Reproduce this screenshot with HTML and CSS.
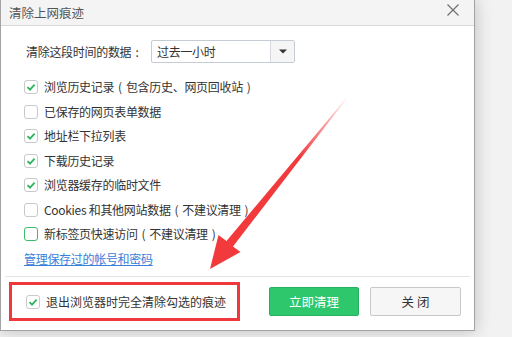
FILE: index.html
```html
<!DOCTYPE html>
<html lang="zh-CN">
<head>
<meta charset="utf-8">
<title>清除上网痕迹</title>
<link rel="stylesheet" href="styles.css">
</head>
<body>
<div class="dialog">
  <div class="titlebar">
    <span class="title">清除上网痕迹</span>
    <svg class="close" width="12" height="12" viewBox="0 0 12 12"><path d="M0.5 0.5 L11.5 11.5 M11.5 0.5 L0.5 11.5" stroke="#707070" stroke-width="1.2" fill="none"/></svg>
  </div>
  <div class="content">
    <div class="range-row">
      <span class="label">清除这段时间的数据<span class="fp">:</span></span>
      <div class="select">
        <span class="select-value">过去一小时</span>
        <span class="select-btn"><svg width="8" height="5" viewBox="0 0 8 5"><path d="M0 0.5 H8 L4 4.5 Z" fill="#333"/></svg></span>
      </div>
    </div>
    <ul class="options">
      <li class="opt"><span class="cb checked"><svg width="14" height="14" viewBox="0 0 14 14"><path d="M3.5 7.2 L6 9.6 L10.6 4.6" stroke="#2db45c" stroke-width="1.8" fill="none"/></svg></span><span class="opt-text">浏览历史记录<span class="fp">(</span>包含历史、网页回收站<span class="fp">)</span></span></li>
      <li class="opt"><span class="cb"></span><span class="opt-text">已保存的网页表单数据</span></li>
      <li class="opt"><span class="cb checked"><svg width="14" height="14" viewBox="0 0 14 14"><path d="M3.5 7.2 L6 9.6 L10.6 4.6" stroke="#2db45c" stroke-width="1.8" fill="none"/></svg></span><span class="opt-text">地址栏下拉列表</span></li>
      <li class="opt"><span class="cb checked"><svg width="14" height="14" viewBox="0 0 14 14"><path d="M3.5 7.2 L6 9.6 L10.6 4.6" stroke="#2db45c" stroke-width="1.8" fill="none"/></svg></span><span class="opt-text">下载历史记录</span></li>
      <li class="opt"><span class="cb checked"><svg width="14" height="14" viewBox="0 0 14 14"><path d="M3.5 7.2 L6 9.6 L10.6 4.6" stroke="#2db45c" stroke-width="1.8" fill="none"/></svg></span><span class="opt-text">浏览器缓存的临时文件</span></li>
      <li class="opt"><span class="cb"></span><span class="opt-text">Cookies 和其他网站数据<span class="fp">(</span>不建议清理<span class="fp">)</span></span></li>
      <li class="opt"><span class="cb hover"></span><span class="opt-text">新标签页快速访问<span class="fp">(</span>不建议清理<span class="fp">)</span></span></li>
    </ul>
    <div class="link-row"><a class="link" href="#">管理保存过的帐号和密码</a></div>
  </div>
  <div class="footer">
    <div class="highlight">
      <span class="cb checked"><svg width="14" height="14" viewBox="0 0 14 14"><path d="M3.5 7.2 L6 9.6 L10.6 4.6" stroke="#2db45c" stroke-width="1.8" fill="none"/></svg></span>
      <span class="opt-text">退出浏览器时完全清除勾选的痕迹</span>
    </div>
    <div class="buttons">
      <button class="btn primary">立即清理</button>
      <button class="btn secondary">关 闭</button>
    </div>
  </div>
</div>
<svg class="arrow" width="512" height="337" viewBox="0 0 512 337">
  <defs>
    <linearGradient id="fade" gradientUnits="userSpaceOnUse" x1="346" y1="99" x2="300" y2="157">
      <stop offset="0" stop-color="#f23a3c" stop-opacity="0.1"/>
      <stop offset="1" stop-color="#f23a3c" stop-opacity="1"/>
    </linearGradient>
  </defs>
  <polygon fill="url(#fade)" points="346.3,99.2 345.7,98.8 226.5,241 218.5,235 210,269 240.5,252 233,246.5"/>
</svg>
</body>
</html>
```
FILE: styles.css
```css
html, body {
  margin: 0;
  padding: 0;
}
body {
  width: 512px;
  height: 337px;
  background: #f2f2f2;
  font-family: "Noto Sans CJK SC", "Microsoft YaHei", sans-serif;
  font-size: 12px;
  color: #333;
  position: relative;
  overflow: hidden;
}
.dialog {
  width: 475px;
  box-sizing: border-box;
  background: #fff;
  border: 1px solid #a3a3a3;
  border-top: none;
  box-shadow: 0 0 16px rgba(0, 0, 0, 0.22);
}
.titlebar {
  height: 25px;
  background: #f4f4f4;
  border-bottom: 1px solid #d9d9d9;
  display: flex;
  align-items: center;
  justify-content: space-between;
  padding: 0 8px 0 8px;
}
.title {
  font-size: 12.5px;
  color: #555;
  line-height: 25px;
  margin-top: -1px;
}
.close {
  margin-top: -5px;
  margin-right: 7px;
}
.content {
  padding: 14px 0 5px 23px;
}
.range-row {
  display: flex;
  align-items: center;
  height: 23px;
}
.label {
  flex: 0 0 125px;
  margin-left: 2px;
  line-height: 23px;
  letter-spacing: -0.3px;
}
.fp {
  display: inline-block;
  width: 11.7px;
  text-align: center;
  letter-spacing: 0;
}
.select {
  width: 144px;
  height: 23px;
  box-sizing: border-box;
  border: 1px solid #c6ccd4;
  border-radius: 2px;
  display: flex;
  align-items: center;
}
.select-value {
  flex: 1;
  padding-left: 5px;
  line-height: 21px;
  letter-spacing: -0.3px;
}
.select-btn {
  width: 23px;
  height: 21px;
  background: #f5f5f5;
  border-left: 1px solid #d6dae0;
  display: flex;
  align-items: center;
  justify-content: center;
}
.options {
  list-style: none;
  margin: 12px 0 0 0;
  padding: 0;
}
.opt {
  height: 24.5px;
  display: flex;
  align-items: center;
}
.cb {
  width: 14px;
  height: 14px;
  box-sizing: border-box;
  border: 1px solid #c9c9c9;
  border-radius: 3px;
  background: #fff;
  flex: 0 0 14px;
  position: relative;
}
.cb svg {
  position: absolute;
  left: -1px;
  top: -1px;
}
.cb.hover {
  border-color: #3dbd6c;
}
.opt-text {
  margin-left: 6px;
  line-height: 16px;
  letter-spacing: -0.3px;
  white-space: nowrap;
}
.link-row {
  height: 24.5px;
  display: flex;
  align-items: center;
}
.link {
  color: #3a80d8;
  text-decoration: underline;
  letter-spacing: -0.3px;
  line-height: 16px;
}
.footer {
  margin: 0 4px;
  border-top: 1px solid #e4e4e4;
  padding: 5px 9px 9px 4px;
  display: flex;
  align-items: center;
}
.highlight {
  width: 231px;
  height: 39px;
  box-sizing: border-box;
  border: 3px solid #ef383b;
  display: flex;
  align-items: center;
  padding-left: 14px;
}
.highlight .opt-text {
  letter-spacing: 0;
}
.buttons {
  margin-left: auto;
  display: flex;
  gap: 11px;
}
.btn {
  width: 91px;
  height: 29px;
  box-sizing: border-box;
  border-radius: 2px;
  font-family: "Noto Sans CJK SC", "Microsoft YaHei", sans-serif;
  font-size: 12.5px;
  padding: 0;
  line-height: 27px;
}
.btn.primary {
  width: 90px;
  background: #2ec76b;
  border: 1px solid #25b25f;
  color: #fff;
}
.btn.secondary {
  background: #f6f6f6;
  border: 1px solid #c8c8c8;
  color: #333;
}
.arrow {
  position: absolute;
  left: 0;
  top: 0;
  pointer-events: none;
}
```
